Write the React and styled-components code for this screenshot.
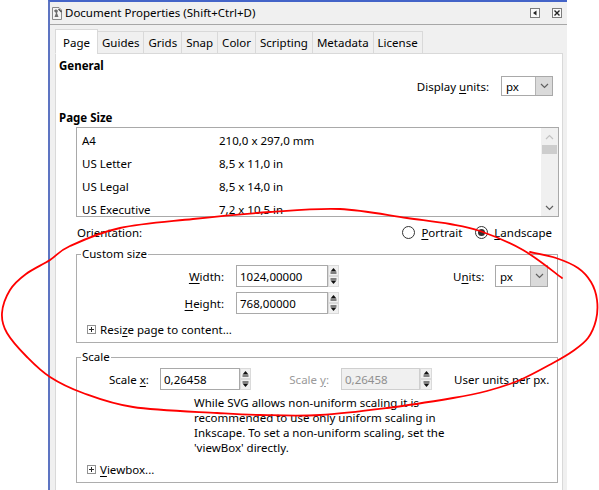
import React from 'react'
import styled, { createGlobalStyle } from 'styled-components'

const GlobalStyle = createGlobalStyle`
  *, *::before, *::after { box-sizing: border-box; }
  html, body { margin: 0; padding: 0; background: #fff; }
  body {
    font-family: "Noto Sans", "Liberation Sans", sans-serif;
    font-size: 11.5px;
    color: #000;
  }
`;

const Screen = styled.div`
  position: relative;
  width: 599px;
  height: 490px;
  overflow: hidden;
  background: #fff;
`;

const Window = styled.div`
  margin-left: 48px;
  width: 519px;
  height: 490px;
  border-top: 2px solid #4464c8;
  border-left: 2px solid #5d74c2;
  background: #f0f0f0;
  display: flex;
  flex-direction: column;
`;

const TitleBar = styled.div`
  display: flex;
  align-items: center;
  height: 23px;
  padding: 0 5px 0 1px;
  border-bottom: 1px solid #a7a7a7;
  gap: 2px;
`;

const Title = styled.span`
  flex: 1;
  white-space: nowrap;
  line-height: 16px;
`;

const DockButtons = styled.div`
  display: flex;
  gap: 12px;
`;

const Body = styled.div`
  flex: 1;
  display: flex;
  flex-direction: column;
  padding: 4px 4px 0 5px;
  min-height: 0;
`;

const TabRow = styled.div`
  display: flex;
  align-items: flex-end;
  height: 25px;
  position: relative;
  z-index: 1;
  padding-left: 1px;
`;

const Tab = styled.div`
  height: ${p => (p.$active ? 25 : 23)}px;
  padding: ${p => (p.$active ? '3px 7px 0' : '1px 4px 0')};
  margin-left: -1px;
  background: ${p => (p.$active ? '#fff' : '#f0f0f0')};
  border: 1px solid #d9d9d9;
  border-bottom-color: ${p => (p.$active ? '#fff' : '#d9d9d9')};
  display: flex;
  align-items: center;
  white-space: nowrap;
  line-height: 16px;
`;

const Panel = styled.div`
  flex: 1;
  margin-top: -1px;
  background: #fff;
  border: 1px solid #d9d9d9;
  border-bottom: none;
  padding: 4px 0 0 3px;
  display: flex;
  flex-direction: column;
`;

const Heading = styled.div`
  font-weight: bold;
  line-height: 16px;
  margin-top: ${p => p.$top || 0}px;
`;

const UnitsRow = styled.div`
  display: flex;
  justify-content: flex-end;
  align-items: center;
  gap: 12px;
  margin: 2px 9px 0 0;
`;

const Combo = styled.div`
  display: flex;
  width: ${p => p.$w}px;
  height: ${p => p.$h}px;
  border: 1px solid #a9a9a9;
  background: #fff;
`;

const ComboValue = styled.div`
  flex: 1;
  padding-left: 4px;
  display: flex;
  align-items: center;
`;

const ComboButton = styled.div`
  width: 17px;
  background: #dadada;
  border-left: 1px solid #b4b4b4;
  display: flex;
  align-items: center;
  justify-content: center;
`;

const List = styled.div`
  display: flex;
  height: 90px;
  margin: 1px 3px 0 17px;
  border: 1px solid #a9a9a9;
  overflow: hidden;
`;

const ListRows = styled.div`
  flex: 1;
  padding: 1px 0 0 5px;
`;

const ListRow = styled.div`
  display: flex;
  height: 23px;
  align-items: center;
  white-space: nowrap;
`;

const NameCell = styled.span`
  width: 137px;
`;

const Scrollbar = styled.div`
  width: 17px;
  background: #f0f0f0;
  display: flex;
  flex-direction: column;
  align-items: center;
`;

const ScrollArrow = styled.div`
  height: 17px;
  width: 17px;
  display: flex;
  align-items: center;
  justify-content: center;
`;

const Thumb = styled.div`
  width: 15px;
  height: 9px;
  background: #cdcdcd;
`;

const Fill = styled.div`
  flex: 1;
`;

const OrientationRow = styled.div`
  display: flex;
  align-items: center;
  height: 16px;
  margin: 7px 10px 0 18px;
`;

const Radio = styled.span`
  width: 13px;
  height: 13px;
  border-radius: 50%;
  border: 1px solid #333;
  background: #fff;
  display: flex;
  align-items: center;
  justify-content: center;
  margin: 0 6px 0 ${p => p.$gap || 0}px;
  &::after {
    content: '';
    width: 7px;
    height: 7px;
    border-radius: 50%;
    background: ${p => (p.$checked ? '#333' : 'transparent')};
  }
`;

const Group = styled.fieldset`
  margin: ${p => p.$top}px 4px 0 17px;
  padding: 0 0 5px 0;
  border: 1px solid #adadad;
  min-width: 0;
`;

const Legend = styled.legend`
  margin-left: 4px;
  padding: 0 1px;
  line-height: 16px;
`;

const FieldRow = styled.div`
  display: flex;
  align-items: center;
  margin-top: ${p => p.$top}px;
`;

const FieldLabel = styled.span`
  width: ${p => p.$w}px;
  margin-left: ${p => p.$left || 0}px;
  margin-right: ${p => p.$gap}px;
  text-align: ${p => p.$align || 'right'};
  white-space: nowrap;
  color: ${p => (p.$disabled ? '#9a9a9a' : '#000')};
`;

const SpinField = styled.div`
  display: flex;
  height: 22px;
`;

const SpinInput = styled.div`
  width: ${p => p.$w}px;
  border: 1px solid ${p => (p.$disabled ? '#cfcfcf' : '#a9a9a9')};
  background: ${p => (p.$disabled ? '#f0f0f0' : '#fff')};
  color: ${p => (p.$disabled ? '#8f8f8f' : '#000')};
  padding-left: 3px;
  display: flex;
  align-items: center;
`;

const SpinButtons = styled.div`
  width: ${p => p.$w || 11}px;
  display: flex;
  flex-direction: column;
`;

const SpinButton = styled.div`
  flex: 1;
  background: #f0f0f0;
  border: 1px solid #dadada;
  display: flex;
  align-items: center;
  justify-content: center;
`;

const Spacer = styled.div`
  flex: 1;
`;

const EndGap = styled.span`
  width: 9px;
`;

const Expander = styled.div`
  display: flex;
  align-items: center;
  gap: 4px;
  height: 16px;
  margin: ${p => p.$top}px 0 0 10px;
`;

const PlusBox = styled.span`
  width: 9px;
  height: 9px;
  border: 1px solid #919191;
  position: relative;
  &::before, &::after {
    content: '';
    position: absolute;
    background: #2d2d2d;
  }
  &::before { left: 1px; right: 1px; top: 3px; height: 1px; }
  &::after { top: 1px; bottom: 1px; left: 3px; width: 1px; }
`;

const Note = styled.p`
  margin: 5px 0 0 117px;
  line-height: 15px;
  white-space: nowrap;
`;

const Overlay = styled.svg`
  position: absolute;
  left: 0;
  top: 0;
  pointer-events: none;
`;

const U = styled.span`
  text-decoration: underline;
  text-underline-offset: 2px;
`;

const Chevron = ({ down = true, color = '#606060' }) => (
  <svg width="9" height="6" viewBox="0 0 9 6">
    <path d={down ? 'M1 1 L4.5 4.5 L8 1' : 'M1 5 L4.5 1.5 L8 5'} fill="none" stroke={color} strokeWidth="1.2" />
  </svg>
)

const SpinArrow = ({ up }) => (
  <svg width="7" height="7" viewBox="0 0 7 7">
    {up ? (
      <>
        <path d="M0.5 4.5 L3.5 1 L6.5 4.5 Z" fill="#111" />
        <rect x="0.5" y="5.5" width="6" height="1" fill="#111" />
      </>
    ) : (
      <>
        <rect x="0.5" y="0.5" width="6" height="1" fill="#111" />
        <path d="M0.5 2.5 L3.5 6 L6.5 2.5 Z" fill="#111" />
      </>
    )}
  </svg>
)

function Spin({ value, w, bw, disabled }) {
  return (
    <SpinField>
      <SpinInput $w={w} $disabled={disabled}>{value}</SpinInput>
      <SpinButtons $w={bw}>
        <SpinButton><SpinArrow up /></SpinButton>
        <SpinButton><SpinArrow /></SpinButton>
      </SpinButtons>
    </SpinField>
  )
}

function Select({ value, w, h }) {
  return (
    <Combo $w={w} $h={h}>
      <ComboValue>{value}</ComboValue>
      <ComboButton><Chevron /></ComboButton>
    </Combo>
  )
}

const DocIcon = () => (
  <svg width="12" height="13" viewBox="0 0 12 13">
    <path d="M1.5 0.5 H8 L10.5 3 V12.5 H1.5 Z" fill="#f4f4f4" stroke="#8a8a8a" />
    <path d="M3 4 C4 2 6 2 7 4 L6 6 L7.5 10 H3.5 L5 6 Z" fill="#6d6d6d" />
    <path d="M7.5 2 L10.5 5" stroke="#4a4a4a" strokeWidth="1.2" />
  </svg>
)

const DockIcon = ({ close }) => (
  <svg width="10" height="10" viewBox="0 0 10 10">
    <rect x="0.5" y="0.5" width="9" height="9" fill="#fafafa" stroke="#7c7c7c" />
    {close ? (
      <path d="M2.5 2.5 L7.5 7.5 M7.5 2.5 L2.5 7.5" stroke="#222" strokeWidth="1.4" />
    ) : (
      <path d="M6.5 2.5 L3 5 L6.5 7.5 Z" fill="#222" />
    )}
  </svg>
)

const tabs = ['Page', 'Guides', 'Grids', 'Snap', 'Color', 'Scripting', 'Metadata', 'License']

const sizes = [
  ['A4', '210,0 x 297,0 mm'],
  ['US Letter', '8,5 x 11,0 in'],
  ['US Legal', '8,5 x 14,0 in'],
  ['US Executive', '7,2 x 10,5 in'],
]

// hand-drawn red loop, points picked off the screenshot
const strokePts = [
  [530, 252], [556, 258], [578, 268], [591, 282], [597, 300], [596, 320],
  [588, 338], [573, 351], [553, 363], [520, 380], [487, 391], [453, 398],
  [387, 408], [320, 415], [260, 415], [217, 413], [133, 407], [83, 393],
  [50, 377], [27, 357], [7, 333], [2, 313], [10, 290], [26, 274], [50, 260],
  [70, 246], [120, 228], [193, 219], [270, 212], [340, 209], [407, 218],
  [450, 224], [480, 231], [523, 250], [562, 278],
]

function smoothPath(pts) {
  let d = `M${pts[0][0]} ${pts[0][1]}`
  for (let i = 0; i < pts.length - 1; i++) {
    const p0 = pts[i - 1] || pts[i]
    const p1 = pts[i]
    const p2 = pts[i + 1]
    const p3 = pts[i + 2] || p2
    const c1x = p1[0] + (p2[0] - p0[0]) / 6
    const c1y = p1[1] + (p2[1] - p0[1]) / 6
    const c2x = p2[0] - (p3[0] - p1[0]) / 6
    const c2y = p2[1] - (p3[1] - p1[1]) / 6
    d += ` C${c1x.toFixed(1)} ${c1y.toFixed(1)} ${c2x.toFixed(1)} ${c2y.toFixed(1)} ${p2[0]} ${p2[1]}`
  }
  return d
}

export default function App() {
  return (
    <Screen>
      <GlobalStyle />
      <Window>
        <TitleBar>
          <DocIcon />
          <Title>Document Properties (Shift+Ctrl+D)</Title>
          <DockButtons>
            <DockIcon />
            <DockIcon close />
          </DockButtons>
        </TitleBar>

        <Body>
          <TabRow>
            {tabs.map((t, i) => (
              <Tab key={t} $active={i === 0}>{t}</Tab>
            ))}
          </TabRow>

          <Panel>
            <Heading>General</Heading>
            <UnitsRow>
              <span>Display <U>u</U>nits:</span>
              <Select value="px" w={52} h={20} />
            </UnitsRow>

            <Heading $top={14}>Page Size</Heading>
            <List>
              <ListRows>
                {sizes.map(([name, dims]) => (
                  <ListRow key={name}>
                    <NameCell>{name}</NameCell>
                    <span>{dims}</span>
                  </ListRow>
                ))}
              </ListRows>
              <Scrollbar>
                <ScrollArrow><Chevron down={false} color="#c2c2c2" /></ScrollArrow>
                <Thumb />
                <Fill />
                <ScrollArrow><Chevron color="#606060" /></ScrollArrow>
              </Scrollbar>
            </List>

            <OrientationRow>
              <span>Orientation:</span>
              <Spacer />
              <Radio $gap={4} />
              <span><U>P</U>ortrait</span>
              <Radio $checked $gap={13} />
              <span><U>L</U>andscape</span>
            </OrientationRow>

            <Group $top={6}>
              <Legend>Custom size</Legend>
              <FieldRow $top={3}>
                <FieldLabel $w={147} $gap={12}><U>W</U>idth:</FieldLabel>
                <Spin value="1024,00000" w={92} bw={11} />
                <Spacer />
                <FieldLabel $w={30} $gap={12}>U<U>n</U>its:</FieldLabel>
                <Select value="px" w={53} h={22} />
                <EndGap />
              </FieldRow>
              <FieldRow $top={5}>
                <FieldLabel $w={147} $gap={12}><U>H</U>eight:</FieldLabel>
                <Spin value="768,00000" w={92} bw={11} />
              </FieldRow>
              <Expander $top={7}>
                <PlusBox />
                <span>Resi<U>z</U>e page to content...</span>
              </Expander>
            </Group>

            <Group $top={6}>
              <Legend>Scale</Legend>
              <FieldRow $top={3}>
                <FieldLabel $w={38} $left={32} $gap={13}>Scale <U>x</U>:</FieldLabel>
                <Spin value="0,26458" w={80} bw={11} />
                <FieldLabel $w={40} $left={38} $gap={12} $disabled>Scale <U>y</U>:</FieldLabel>
                <Spin value="0,26458" w={79} bw={12} disabled />
                <FieldLabel $w={92} $left={22} $gap={0} $align="left">User units per px.</FieldLabel>
              </FieldRow>
              <Note>
                While SVG allows non-uniform scaling it is<br />
                recommended to use only uniform scaling in<br />
                Inkscape. To set a non-uniform scaling, set the<br />
                'viewBox' directly.
              </Note>
              <Expander $top={6}>
                <PlusBox />
                <span><U>V</U>iewbox...</span>
              </Expander>
            </Group>
          </Panel>
        </Body>
      </Window>

      <Overlay width="599" height="490" viewBox="0 0 599 490">
        <path d={smoothPath(strokePts)} fill="none" stroke="#f00" strokeWidth="1.8" strokeLinecap="round" strokeLinejoin="round" />
      </Overlay>
    </Screen>
  )
}
